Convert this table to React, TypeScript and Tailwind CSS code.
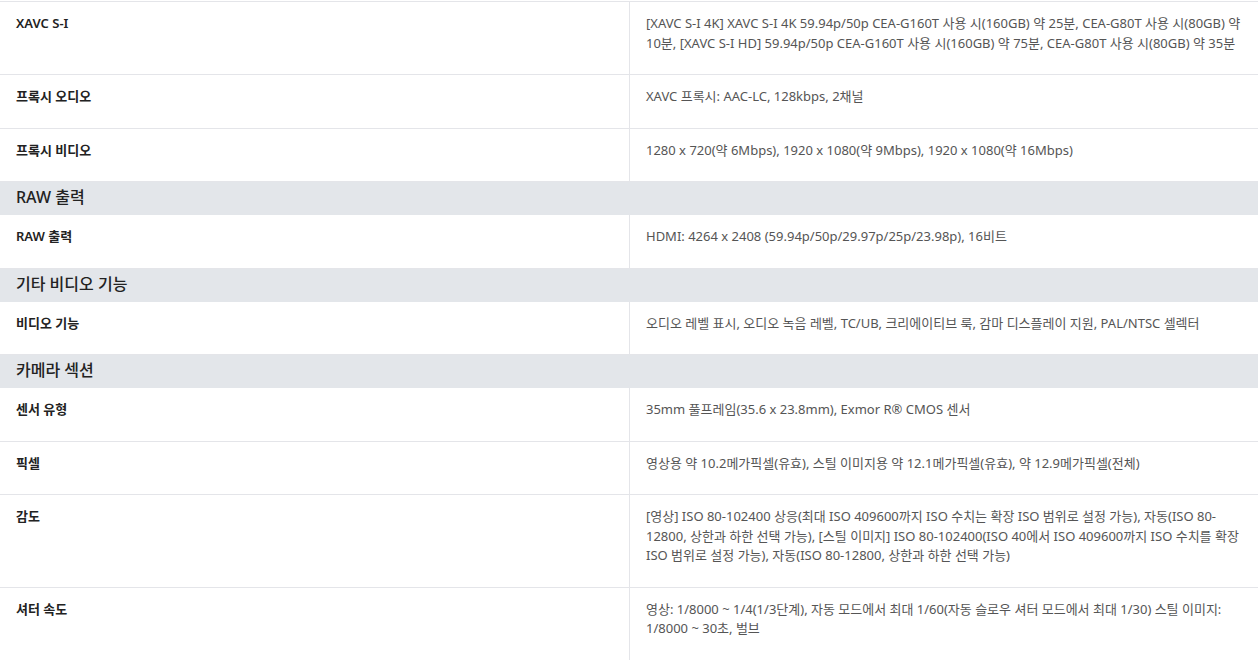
type Row = { label: string; value: string }
type Block = { title?: string; rows: Row[] }

const blocks: Block[] = [
  {
    rows: [
      {
        label: 'XAVC S-I',
        value:
          '[XAVC S-I 4K] XAVC S-I 4K 59.94p/50p CEA-G160T 사용 시(160GB) 약 25분, CEA-G80T 사용 시(80GB) 약 10분, [XAVC S-I HD] 59.94p/50p CEA-G160T 사용 시(160GB) 약 75분, CEA-G80T 사용 시(80GB) 약 35분',
      },
      { label: '프록시 오디오', value: 'XAVC 프록시: AAC-LC, 128kbps, 2채널' },
      { label: '프록시 비디오', value: '1280 x 720(약 6Mbps), 1920 x 1080(약 9Mbps), 1920 x 1080(약 16Mbps)' },
    ],
  },
  {
    title: 'RAW 출력',
    rows: [{ label: 'RAW 출력', value: 'HDMI: 4264 x 2408 (59.94p/50p/29.97p/25p/23.98p), 16비트' }],
  },
  {
    title: '기타 비디오 기능',
    rows: [
      {
        label: '비디오 기능',
        value: '오디오 레벨 표시, 오디오 녹음 레벨, TC/UB, 크리에이티브 룩, 감마 디스플레이 지원, PAL/NTSC 셀렉터',
      },
    ],
  },
  {
    title: '카메라 섹션',
    rows: [
      { label: '센서 유형', value: '35mm 풀프레임(35.6 x 23.8mm), Exmor R® CMOS 센서' },
      { label: '픽셀', value: '영상용 약 10.2메가픽셀(유효), 스틸 이미지용 약 12.1메가픽셀(유효), 약 12.9메가픽셀(전체)' },
      {
        label: '감도',
        value:
          '[영상] ISO 80-102400 상응(최대 ISO 409600까지 ISO 수치는 확장 ISO 범위로 설정 가능), 자동(ISO 80-12800, 상한과 하한 선택 가능), [스틸 이미지] ISO 80-102400(ISO 40에서 ISO 409600까지 ISO 수치를 확장 ISO 범위로 설정 가능), 자동(ISO 80-12800, 상한과 하한 선택 가능)',
      },
      {
        label: '셔터 속도',
        value:
          '영상: 1/8000 ~ 1/4(1/3단계), 자동 모드에서 최대 1/60(자동 슬로우 셔터 모드에서 최대 1/30) 스틸 이미지: 1/8000 ~ 30초, 벌브',
      },
    ],
  },
]

function SpecRow({ row }: { row: Row }) {
  return (
    <div className="grid grid-cols-[630px_1fr] border-b border-[#e4e5e9]">
      <div className="border-r border-[#e4e5e9] pl-4 pr-4 pt-3 pb-[21px] text-[13px] leading-[1.5] font-semibold text-[#222]">
        {row.label}
      </div>
      <div className="pl-4 pr-4 pt-3 pb-[21px] text-[13px] leading-[1.5] text-[#555]">{row.value}</div>
    </div>
  )
}

export default function App() {
  return (
    <div
      className="min-h-screen bg-white pt-px"
      style={{ fontFamily: '"Noto Sans", "Noto Sans CJK KR", sans-serif' }}
    >
      <div className="border-t border-[#e4e5e9]">
        {blocks.map((b, i) => (
          <div key={i}>
            {b.title && (
              <div className="bg-[#e3e6ea] pl-4 pt-[3px] pb-[6px] text-base leading-6 font-medium text-[#222]">
                {b.title}
              </div>
            )}
            {b.rows.map((r) => (
              <SpecRow key={r.label + i} row={r} />
            ))}
          </div>
        ))}
      </div>
    </div>
  )
}
